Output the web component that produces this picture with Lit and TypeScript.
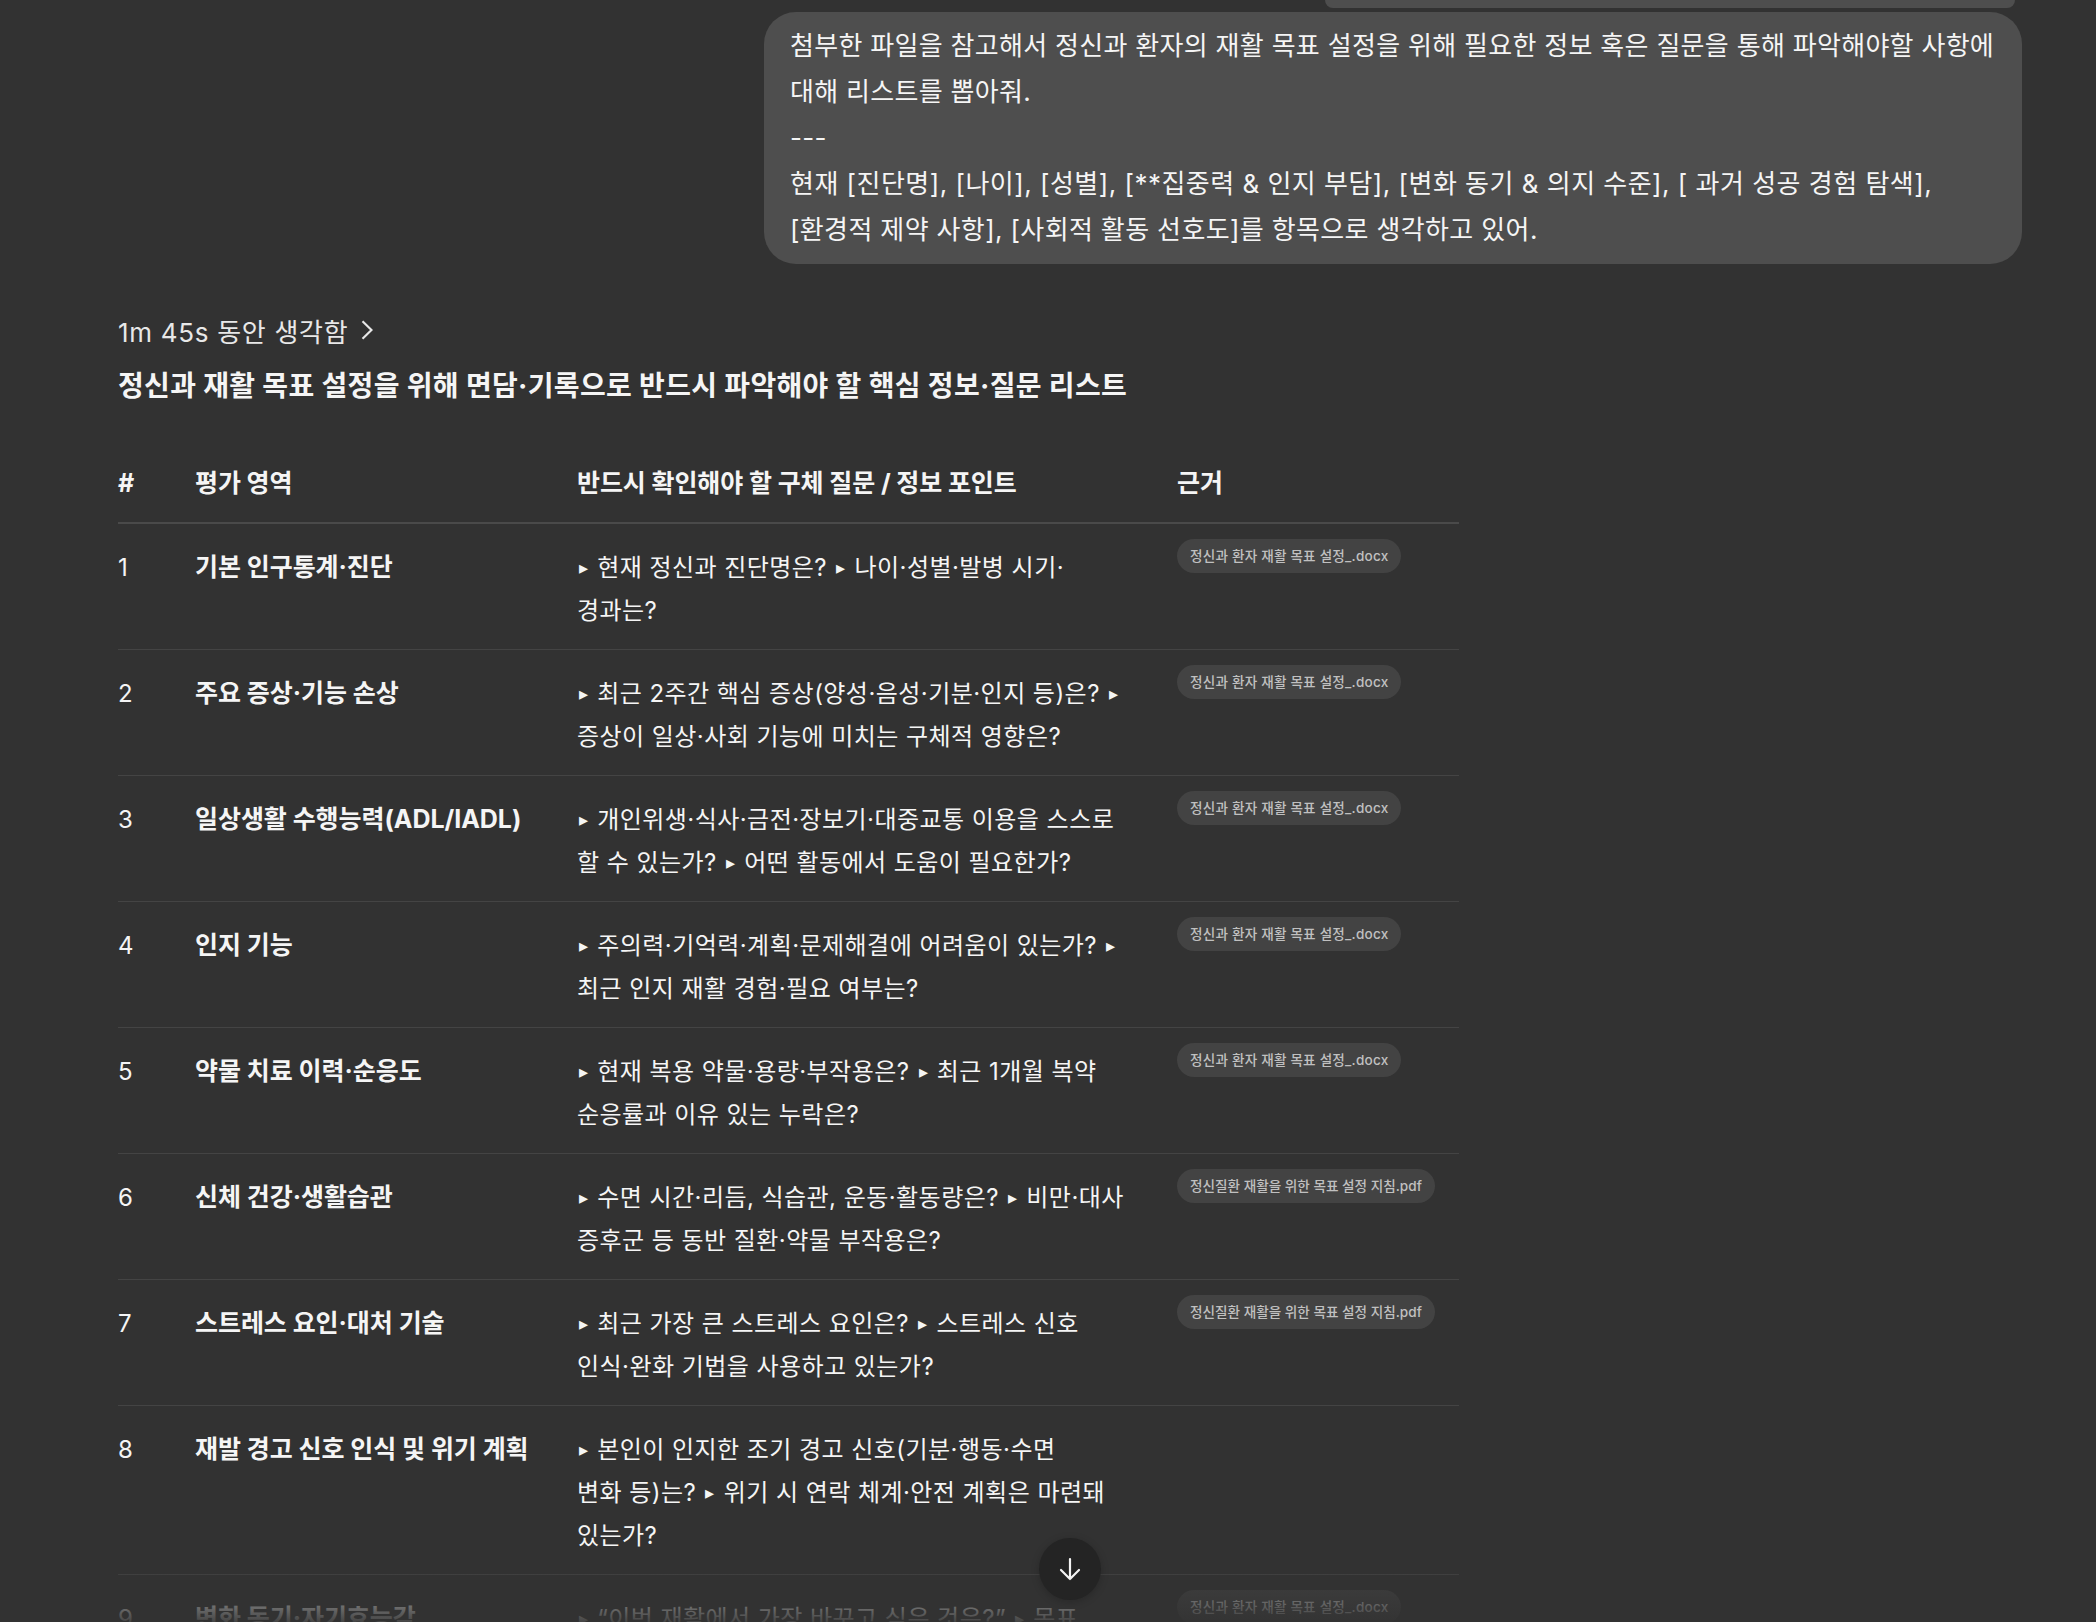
import { LitElement, html, css } from "lit";
import { customElement } from "lit/decorators.js";

const DOCX = "정신과 환자 재활 목표 설정_.docx";
const PDF = "정신질환 재활을 위한 목표 설정 지침.pdf";

const ROWS: { n: string; area: string; lines: string[]; src?: string }[] = [
  { n: "1", area: "기본 인구통계·진단", lines: ["▸ 현재 정신과 진단명은? ▸ 나이·성별·발병 시기·", "경과는?"], src: DOCX },
  { n: "2", area: "주요 증상·기능 손상", lines: ["▸ 최근 2주간 핵심 증상(양성·음성·기분·인지 등)은? ▸", "증상이 일상·사회 기능에 미치는 구체적 영향은?"], src: DOCX },
  { n: "3", area: "일상생활 수행능력(ADL/IADL)", lines: ["▸ 개인위생·식사·금전·장보기·대중교통 이용을 스스로", "할 수 있는가? ▸ 어떤 활동에서 도움이 필요한가?"], src: DOCX },
  { n: "4", area: "인지 기능", lines: ["▸ 주의력·기억력·계획·문제해결에 어려움이 있는가? ▸", "최근 인지 재활 경험·필요 여부는?"], src: DOCX },
  { n: "5", area: "약물 치료 이력·순응도", lines: ["▸ 현재 복용 약물·용량·부작용은? ▸ 최근 1개월 복약", "순응률과 이유 있는 누락은?"], src: DOCX },
  { n: "6", area: "신체 건강·생활습관", lines: ["▸ 수면 시간·리듬, 식습관, 운동·활동량은? ▸ 비만·대사", "증후군 등 동반 질환·약물 부작용은?"], src: PDF },
  { n: "7", area: "스트레스 요인·대처 기술", lines: ["▸ 최근 가장 큰 스트레스 요인은? ▸ 스트레스 신호", "인식·완화 기법을 사용하고 있는가?"], src: PDF },
  { n: "8", area: "재발 경고 신호 인식 및 위기 계획", lines: ["▸ 본인이 인지한 조기 경고 신호(기분·행동·수면", "변화 등)는? ▸ 위기 시 연락 체계·안전 계획은 마련돼", "있는가?"] },
  { n: "9", area: "변화 동기·자기효능감", lines: ["▸ “이번 재활에서 가장 바꾸고 싶은 것은?” ▸ 목표", "달성 자신감은?"], src: DOCX },
];

@customElement("app-root")
export class AppRoot extends LitElement {
  static styles = css`
    :host {
      display: block;
      position: relative;
      height: 1622px;
      overflow: hidden;
      background: #323232;
      color: #f5f5f5;
      font-family: Inter, "Noto Sans CJK KR", sans-serif;
    }
    .user {
      display: flex;
      flex-direction: column;
      align-items: flex-end;
      gap: 4px;
      padding-right: 74px;
    }
    .prev {
      width: 690px;
      height: 8px;
      margin-right: 7px;
      background: #4e4e4e;
      border-radius: 0 0 20px 20px;
    }
    .bubble {
      box-sizing: border-box;
      width: 1258px;
      height: 252px;
      padding: 11px 25px 0 26px;
      background: #4e4e4e;
      border-radius: 32px;
      font-size: 26px;
      letter-spacing: 0.3px;
      line-height: 46px;
      white-space: nowrap;
    }
    .bubble .wide { letter-spacing: 0.48px; }
    .bubble .last { letter-spacing: 0.36px; }
    .answer {
      padding: 46px 0 0 118px;
      width: 1341px;
    }
    .thought {
      display: flex;
      align-items: center;
      gap: 13px;
      height: 40px;
      font-size: 26px;
      letter-spacing: 0.7px;
      color: #e8e8e8;
    }
    .thought svg { display: block; }
    h1 {
      margin: 16px 0 0;
      font-size: 28px;
      line-height: 40px;
      font-weight: 700;
      letter-spacing: 0.33px;
    }
    table {
      border-collapse: collapse;
      table-layout: fixed;
      width: 1341px;
      margin-top: 36px;
    }
    th, td {
      text-align: left;
      vertical-align: top;
      padding: 22px 0 17px;
      font-size: 24px;
      letter-spacing: 0.45px;
      line-height: 43px;
    }
    th {
      font-size: 25px;
      letter-spacing: -0.1px;
      font-weight: 700;
      padding: 20px 0 17px;
      border-bottom: 2px solid #4a4a4a;
    }
    td { border-bottom: 1px solid #444444; }
    td.area { font-weight: 700; font-size: 25px; letter-spacing: -0.05px; }
    .q { white-space: nowrap; }
    .tri {
      display: inline-block;
      width: 13px;
      padding-left: 2px;
      box-sizing: border-box;
      font-size: 18px;
      line-height: 1;
      vertical-align: 2px;
      letter-spacing: 0;
    }
    .pill {
      display: inline-block;
      vertical-align: top;
      height: 34px;
      margin-top: -7px;
      padding: 0 13px;
      border-radius: 17px;
      background: #434343;
      color: #c0c0c0;
      font-size: 13.6px;
      font-weight: 500;
      line-height: 34px;
      letter-spacing: 0.2px;
    }
    .pill.pdf { letter-spacing: 0; }
    .fade {
      position: absolute;
      left: 0;
      right: 0;
      bottom: 0;
      height: 60px;
      background: linear-gradient(to bottom, rgba(50, 50, 50, 0.1), rgba(50, 50, 50, 0.9));
    }
    .down {
      position: absolute;
      left: 1039px;
      top: 1538px;
      width: 62px;
      height: 62px;
      display: flex;
      align-items: center;
      justify-content: center;
      border-radius: 50%;
      background: #242424;
      box-shadow: 0 2px 8px rgba(0, 0, 0, 0.2);
    }
  `;

  private line(l: string) {
    return l.split("▸").map((part, i) => html`${i ? html`<span class="tri">▸</span>` : ""}${part}`);
  }

  render() {
    return html`
      <div class="user">
        <div class="prev"></div>
        <div class="bubble">
          첨부한 파일을 참고해서 정신과 환자의 재활 목표 설정을 위해 필요한 정보 혹은 질문을 통해 파악해야할 사항에<br />
          대해 리스트를 뽑아줘.<br />
          ---<br />
          <span class="wide">현재 [진단명], [나이], [성별], [**집중력 &amp; 인지 부담], [변화 동기 &amp; 의지 수준], [ 과거 성공 경험 탐색],</span><br />
          <span class="last">[환경적 제약 사항], [사회적 활동 선호도]를 항목으로 생각하고 있어.</span>
        </div>
      </div>
      <div class="answer">
        <div class="thought">
          <span>1m 45s 동안 생각함</span>
          <svg width="12" height="20" viewBox="0 0 12 20" fill="none" stroke="#e8e8e8" stroke-width="2.2">
            <path d="M1.5 1.2 L10.5 10 L1.5 18.8" />
          </svg>
        </div>
        <h1>정신과 재활 목표 설정을 위해 면담·기록으로 반드시 파악해야 할 핵심 정보·질문 리스트</h1>
        <table>
          <colgroup>
            <col style="width:77px" />
            <col style="width:382px" />
            <col style="width:600px" />
            <col />
          </colgroup>
          <thead>
            <tr>
              <th>#</th>
              <th>평가 영역</th>
              <th>반드시 확인해야 할 구체 질문 / 정보 포인트</th>
              <th>근거</th>
            </tr>
          </thead>
          <tbody>
            ${ROWS.map(
              (r) => html`
                <tr>
                  <td>${r.n}</td>
                  <td class="area">${r.area}</td>
                  <td class="q">${r.lines.map((l, i) => html`${i ? html`<br />` : ""}${this.line(l)}`)}</td>
                  <td>${r.src ? html`<span class="pill ${r.src === PDF ? "pdf" : ""}">${r.src}</span>` : ""}</td>
                </tr>
              `
            )}
          </tbody>
        </table>
      </div>
      <div class="fade"></div>
      <div class="down">
        <svg width="24" height="24" viewBox="0 0 24 24" fill="none" stroke="#f4f4f4" stroke-width="2.2" stroke-linecap="round" stroke-linejoin="round">
          <path d="M12 2 V22 M3 13 L12 22 L21 13" />
        </svg>
      </div>
    `;
  }
}
